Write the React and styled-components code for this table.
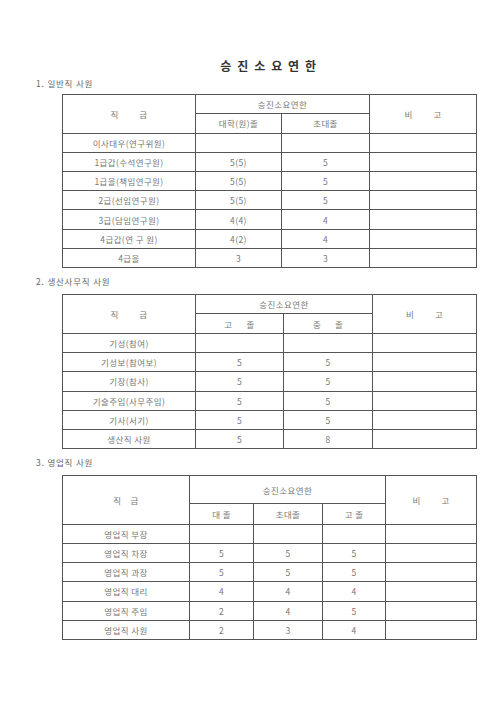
import React from "react";
import styled, { createGlobalStyle } from "styled-components";

const Global = createGlobalStyle`
  html, body { margin: 0; padding: 0; background: #fff; }
  body { font-family: "Noto Sans CJK KR", "Noto Sans", sans-serif; }
`;

const Page = styled.div`
  width: 504px;
  height: 713px;
  box-sizing: border-box;
  padding-top: 58px;
  display: flex;
  flex-direction: column;
`;

const Title = styled.h1`
  margin: 0 0 3px;
  padding-left: 34px;
  text-align: center;
  font-size: 12px;
  line-height: 16px;
  font-weight: 700;
  color: #333;
  letter-spacing: 1.6px;
  white-space: pre;
`;

const Label = styled.div`
  margin: 0 0 ${(p) => p.$after}px 36px;
  font-size: 8.5px;
  line-height: 12px;
  color: #666;
  letter-spacing: 0.8px;
  white-space: pre;
`;

const Section = styled.section`
  display: flex;
  flex-direction: column;
  margin-bottom: ${(p) => p.$after}px;
`;

const Table = styled.table`
  margin-left: 62px;
  width: 414px;
  border-collapse: collapse;
  table-layout: fixed;
  border: 1px solid #555;
`;

const Cell = styled.td`
  border: 1px solid #555;
  padding: 0;
  height: ${(p) => p.$h || 18.2}px;
  text-align: center;
  vertical-align: middle;
  font-size: 8.5px;
  line-height: 10px;
  color: #777;
  letter-spacing: 0.4px;
  white-space: pre;
  font-weight: 400;
`;

const Col = styled.col``;

function DataTable({ cols, groupLabel, sub, rows, headH }) {
  const n = sub.length;
  return (
    <Table>
      <colgroup>
        {cols.map((w, i) => (
          <Col key={i} style={{ width: w }} />
        ))}
      </colgroup>
      <tbody>
        <tr>
          <Cell as="th" rowSpan={2}>{groupLabel.left}</Cell>
          <Cell as="th" colSpan={n} $h={headH[0]}>승진소요연한</Cell>
          <Cell as="th" rowSpan={2}>{groupLabel.right}</Cell>
        </tr>
        <tr>
          {sub.map((s, i) => (
            <Cell as="th" key={i} $h={headH[1]}>{s}</Cell>
          ))}
        </tr>
        {rows.map((r, i) => (
          <tr key={i}>
            {r.map((c, j) => (
              <Cell key={j}>{c}</Cell>
            ))}
            <Cell />
          </tr>
        ))}
      </tbody>
    </Table>
  );
}

const t1 = [
  ["이사대우(연구위원)", "", ""],
  ["1급갑(수석연구원)", "5(5)", "5"],
  ["1급을(책임연구원)", "5(5)", "5"],
  ["2급(선임연구원)", "5(5)", "5"],
  ["3급(담임연구원)", "4(4)", "4"],
  ["4급갑(연 구 원)", "4(2)", "4"],
  ["4급을", "3", "3"],
];

const t2 = [
  ["기성(참여)", "", ""],
  ["기성보(참여보)", "5", "5"],
  ["기장(참사)", "5", "5"],
  ["기술주임(사무주임)", "5", "5"],
  ["기사(서기)", "5", "5"],
  ["생산직 사원", "5", "8"],
];

const t3 = [
  ["영업직 부장", "", "", ""],
  ["영업직 차장", "5", "5", "5"],
  ["영업직 과장", "5", "5", "5"],
  ["영업직 대리", "4", "4", "4"],
  ["영업직 주임", "2", "4", "5"],
  ["영업직 사원", "2", "3", "4"],
];

export default function App() {
  return (
    <Page>
      <Global />
      <Title>승 진 소 요 연 한</Title>
      <Label $after={5}>1. 일반직 사원</Label>
      <Section $after={7}>
        <DataTable
          cols={[133, 86, 88, 107]}
          groupLabel={{ left: "직         금", right: "비         고" }}
          sub={["대학(원)졸", "초대졸"]}
          rows={t1}
          headH={[18, 18.7]}
        />
      </Section>
      <Label $after={7}>2. 생산사무직 사원</Label>
      <Section $after={7}>
        <DataTable
          cols={[133, 88, 89, 104]}
          groupLabel={{ left: "직         금", right: "비         고" }}
          sub={["고      졸", "중      졸"]}
          rows={t2}
          headH={[18, 19]}
        />
      </Section>
      <Label $after={7}>3. 영업직 사원</Label>
      <Section $after={0}>
        <DataTable
          cols={[127, 64, 69, 63, 91]}
          groupLabel={{ left: "직    금", right: "비         고" }}
          sub={["대 졸", "초대졸", "고 졸"]}
          rows={t3}
          headH={[27, 19.7]}
        />
      </Section>
    </Page>
  );
}
